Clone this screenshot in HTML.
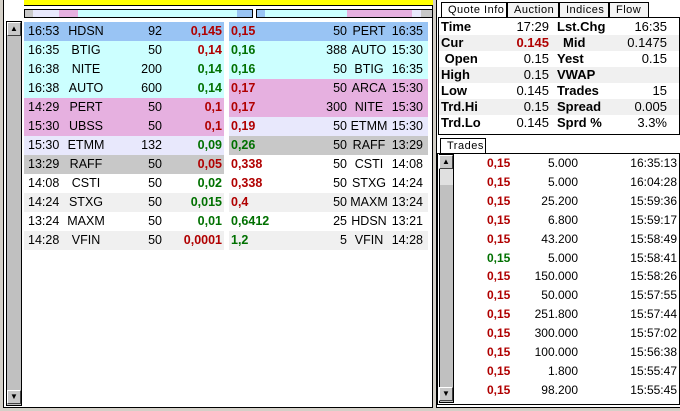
<!DOCTYPE html>
<html><head><style>
*{margin:0;padding:0;box-sizing:border-box}
body{width:680px;height:411px;background:#d4d0c8;font-family:"Liberation Sans",sans-serif;font-size:12px;position:relative;overflow:hidden}
.abs{position:absolute}
.left{left:3px;top:0;width:430px;height:408px;background:#fff;border:1px solid #000;border-top:none}
.sb{background:#c0c0c0;border:1px solid #000}
.btn{position:absolute;width:14px;height:14px;background:#c8c8c8;border:1px solid;border-color:#fff #404040 #404040 #fff;font-size:8px;text-align:center;line-height:12px}
.row{position:absolute;height:19px;line-height:19px;white-space:nowrap}
.row span{position:absolute}
.r{color:#b00000;font-weight:bold}
.g{color:#007000;font-weight:bold}
.b{font-weight:bold}
.tab{position:absolute;height:15px;border:1px solid #000;border-bottom:none;background:#f4f4f4;font-size:11px;line-height:14px;padding-left:6px;letter-spacing:.5px}
</style></head><body>
<div class="abs left"></div>
<div class="abs" style="left:24px;top:0;width:409px;height:6px;background:#ffff00;border-bottom:1px solid #000"></div>
<div class="abs" style="left:24px;top:9px;width:229px;height:9px;border:1px solid #000;background:linear-gradient(90deg,#c8c8c8 0 8px,#e8e8fc 8px 34px,#e6b0e0 34px 53px,#ccffff 53px 212px,#99c4f4 212px)"></div>
<div class="abs" style="left:256px;top:9px;width:177px;height:9px;border:1px solid #000;background:linear-gradient(90deg,#99c4f4 0 8px,#ccffff 8px 90px,#e6b0e0 90px 155px,#e8e8fc 155px 164px,#c8c8c8 164px)"></div>
<div class="abs sb" style="left:6px;top:21px;width:16px;height:385px"></div>
<div class="btn" style="left:7px;top:22px">▲</div>
<div class="btn" style="left:7px;top:390px">▼</div>
<div id="L"></div>
<div class="abs" style="left:436px;top:0;width:244px;height:408px;background:#fff;border-left:1px solid #000;border-bottom:1px solid #000"></div>
<div class="tab" style="left:441px;top:2px;width:66px;background:#fff">Quote Info</div>
<div class="tab" style="left:507px;top:2px;width:52px">Auction</div>
<div class="tab" style="left:559px;top:2px;width:50px">Indices</div>
<div class="tab" style="left:609px;top:2px;width:40px">Flow</div>
<div class="abs" style="left:438px;top:17px;width:242px;height:118px;border:1px solid #000;background:#fff"></div>
<div id="Q"></div>
<div class="tab" style="left:440px;top:138px;width:46px;background:#fff">Trades</div>
<div class="abs" style="left:437px;top:153px;width:243px;height:252px;border:1px solid #000;background:#fff"></div>
<div class="abs sb" style="left:439px;top:154px;width:15px;height:249px;background:linear-gradient(#e0e0e0 0 30px,#c0c0c0 30px)"></div>
<div class="btn" style="left:439px;top:155px">▲</div>
<div class="btn" style="left:439px;top:387px">▼</div>
<div id="T"></div>
<script>
var L=[["#99c4f4","16:53","HDSN","92","0,145","r","0,15","r","50","PERT","16:35","#99c4f4"],
["#ccffff","16:35","BTIG","50","0,14","r","0,16","g","388","AUTO","15:30","#ccffff"],
["#ccffff","16:38","NITE","200","0,14","g","0,16","g","50","BTIG","16:35","#ccffff"],
["#ccffff","16:38","AUTO","600","0,14","g","0,17","r","50","ARCA","15:30","#e6b0e0"],
["#e6b0e0","14:29","PERT","50","0,1","r","0,17","r","300","NITE","15:30","#e6b0e0"],
["#e6b0e0","15:30","UBSS","50","0,1","r","0,19","r","50","ETMM","15:30","#e8e8fc"],
["#e8e8fc","15:30","ETMM","132","0,09","g","0,26","g","50","RAFF","13:29","#c8c8c8"],
["#c8c8c8","13:29","RAFF","50","0,05","r","0,338","r","50","CSTI","14:08","#fff"],
["#fff","14:08","CSTI","50","0,02","g","0,338","r","50","STXG","14:24","#fff"],
["#f0f0f0","14:24","STXG","50","0,015","g","0,4","r","50","MAXM","13:24","#f0f0f0"],
["#fff","13:24","MAXM","50","0,01","g","0,6412","g","25","HDSN","13:21","#fff"],
["#f0f0f0","14:28","VFIN","50","0,0001","r","1,2","g","5","VFIN","14:28","#f0f0f0"]];
var h="";L.forEach(function(a,i){var y=22+i*19;
h+='<div class="row" style="left:24px;top:'+y+'px;width:200px;font-size:12.5px;background:'+a[0]+'"><span style="left:4px">'+a[1]+'</span><span style="left:42px;width:40px;text-align:center">'+a[2]+'</span><span style="right:62px">'+a[3]+'</span><span class="'+a[5]+'" style="right:2px">'+a[4]+'</span></div>';
h+='<div class="row" style="left:229px;top:'+y+'px;width:199px;font-size:12.5px;background:'+a[11]+'"><span class="'+a[7]+'" style="left:2px">'+a[6]+'</span><span style="right:81px">'+a[8]+'</span><span style="left:117px;width:46px;text-align:center">'+a[9]+'</span><span style="right:5px">'+a[10]+'</span></div>';});
document.getElementById("L").innerHTML=h;
var Q=[["Time","17:29","Lst.Chg","16:35"],["Cur","0.145","Mid","0.1475"],[" Open","0.15","Yest","0.15"],["High","0.15","VWAP",""],["Low","0.145","Trades","15"],["Trd.Hi","0.15","Spread","0.005"],["Trd.Lo","0.145","Sprd %","3.3%"]];
h="";Q.forEach(function(a,i){var y=19+i*16;
h+='<div class="row" style="left:439px;top:'+y+'px;width:240px;height:16px;line-height:16px;font-size:13px;background:'+(i%2?'#f0f0f0':'#fff')+'"><span class="b" style="left:2px">'+a[0].replace(" ","&nbsp;")+'</span><span '+(i==1?'class="r" ':'')+'style="right:130px">'+a[1]+'</span><span class="b" style="left:'+(i==1?'124':'118')+'px">'+a[2]+'</span><span style="right:12px">'+a[3]+'</span></div>';});
document.getElementById("Q").innerHTML=h;
var T=[["5.000","16:35:13"],["5.000","16:04:28"],["25.200","15:59:36"],["6.800","15:59:17"],["43.200","15:58:49"],["5.000","15:58:41"],["150.000","15:58:26"],["50.000","15:57:55"],["251.800","15:57:44"],["300.000","15:57:02"],["100.000","15:56:38"],["1.800","15:55:47"],["98.200","15:55:45"]];
h="";T.forEach(function(a,i){var y=154+i*18.9;
h+='<div class="row" style="left:455px;top:'+y+'px;width:222px"><span class="'+(i==5?'g':'r')+'" style="left:32px">0,15</span><span style="right:99px">'+a[0]+'</span><span style="right:0">'+a[1]+'</span></div>';});
document.getElementById("T").innerHTML=h;
</script>
</body></html>
